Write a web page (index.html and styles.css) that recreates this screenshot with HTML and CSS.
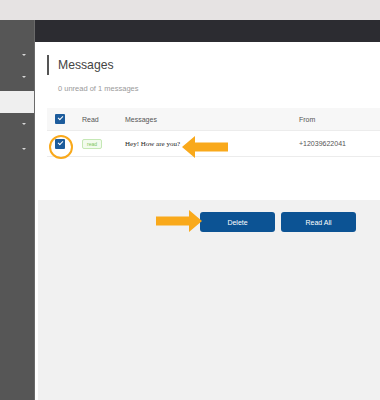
FILE: index.html
```html
<!DOCTYPE html>
<html lang="en">
<head>
  <meta charset="UTF-8" />
  <meta name="viewport" content="width=device-width, initial-scale=1.0"/>
  <title>Messages</title>
  <link rel="stylesheet" href="styles.css">
</head>
<body>

  <div class="top-strip"></div>

  <div class="layout">
    <div class="sidebar">
      <div class="nav-group">
        <div class="nav-item"><span class="caret"></span></div>
        <div class="nav-item"><span class="caret"></span></div>
      </div>
      <div class="nav-gap"></div>
      <div class="nav-group nav-group-last">
        <div class="nav-item"><span class="caret"></span></div>
        <div class="nav-item"><span class="caret"></span></div>
      </div>
    </div>

    <div class="main">
      <div class="topbar"></div>

      <div class="panel">
        <h1 class="page-title">Messages</h1>
        <p class="summary">0 unread of 1 messages</p>

        <div class="table">
          <div class="table-row table-head">
            <div class="cell"><span class="checkbox"></span></div>
            <div class="cell">Read</div>
            <div class="cell">Messages</div>
            <div class="cell">From</div>
          </div>
          <div class="table-row">
            <div class="cell"><span class="checkbox"></span></div>
            <div class="cell"><span class="badge">read</span></div>
            <div class="cell message-text">Hey! How are you?</div>
            <div class="cell">+12039622041</div>
          </div>
        </div>
      </div>

      <div class="actions">
        <button class="button">Delete</button>
        <button class="button">Read All</button>
      </div>
    </div>
  </div>

  <!-- tutorial markers drawn over the page -->
  <div class="marker-circle"></div>
  <svg class="marker-arrow arrow-left" width="48" height="24" viewBox="0 0 48 24">
    <path d="M0 12 L13 1 L13 7.5 L46 7.5 L46 16.5 L13 16.5 L13 23 Z" fill="#f9a91b"/>
  </svg>
  <svg class="marker-arrow arrow-right" width="48" height="24" viewBox="0 0 48 24">
    <path d="M47 12 L34 1 L34 7.5 L1 7.5 L1 16.5 L34 16.5 L34 23 Z" fill="#f9a91b"/>
  </svg>

</body>
</html>
```

FILE: styles.css
```css
* {
  margin: 0;
  padding: 0;
  box-sizing: border-box;
}

body {
  font-family: "Liberation Sans", Arial, sans-serif;
  background: #e6e3e3;
  width: 380px;
  height: 400px;
  overflow: hidden;
  position: relative;
}

.top-strip {
  height: 20px;
  background: #e6e3e3;
}

.layout {
  display: flex;
  height: 380px;
}

.sidebar {
  width: 35px;
  display: flex;
  flex-direction: column;
  border-right: 1px solid #6a6a6a;
}

.nav-group {
  background: #565656;
  height: 71px;
  padding-top: 34px;
}

.nav-group .nav-item {
  height: 22px;
}

.nav-group-last {
  flex: 1;
  padding-top: 10px;
}

.nav-group-last .nav-item {
  height: 25px;
}

.nav-gap {
  height: 22px;
  background: #efefef;
}

.nav-item {
  display: flex;
  justify-content: flex-end;
  padding-right: 8px;
}

.caret {
  width: 0;
  height: 0;
  border-left: 2px solid transparent;
  border-right: 2px solid transparent;
  border-top: 2px solid #d8d8d8;
}

.main {
  flex: 1;
  display: flex;
  flex-direction: column;
  background: #fff;
}

.topbar {
  height: 22px;
  background: #2c2c31;
}

.panel {
  height: 158px;
  padding: 13px 0 0 12px;
}

.page-title {
  border-left: 2px solid #555;
  height: 20px;
  line-height: 20px;
  padding-left: 9px;
  font-size: 12.2px;
  font-weight: normal;
  color: #444;
}

.summary {
  margin: 9px 0 0 11px;
  font-size: 7.5px;
  line-height: 10px;
  color: #9a9a9a;
}

.table {
  margin-top: 14px;
}

.table-row {
  display: grid;
  grid-template-columns: 35px 43px 174px 1fr;
  align-items: center;
  height: 26px;
  border-bottom: 1px solid #ececec;
  font-size: 7px;
  color: #555;
}

.table-head {
  height: 23px;
  background: #f7f7f7;
}

.cell {
  display: flex;
  align-items: center;
}

.checkbox {
  width: 10px;
  height: 10px;
  margin-left: 8px;
  background: #1d5c9c;
  border-radius: 1px;
  position: relative;
}

.checkbox::after {
  content: "";
  position: absolute;
  left: 3px;
  top: 2px;
  width: 4px;
  height: 2px;
  border-left: 1px solid #fff;
  border-bottom: 1px solid #fff;
  transform: rotate(-45deg);
}

.badge {
  font-size: 5px;
  color: #7cc65c;
  background: #f2fbee;
  border: 1px solid #c5e8b5;
  border-radius: 2px;
  padding: 1px 4px;
  line-height: 6px;
}

.message-text {
  font-family: "Liberation Serif", "Times New Roman", serif;
  font-size: 7px;
  color: #222;
}

.actions {
  flex: 1;
  background: #f1f1f1;
  margin-left: 3px;
  display: flex;
  justify-content: flex-end;
  align-items: flex-start;
  gap: 6px;
  padding: 12px 24px 0 0;
}

.button {
  width: 75px;
  height: 20px;
  border: none;
  border-radius: 3px;
  background: #0c5394;
  color: #fff;
  font-family: "Liberation Sans", Arial, sans-serif;
  font-size: 7px;
}

.marker-circle {
  position: absolute;
  left: 49px;
  top: 135px;
  width: 24px;
  height: 24px;
  border: 2.5px solid #f9a91b;
  border-radius: 50%;
}

.marker-arrow {
  position: absolute;
}

.arrow-left {
  left: 182px;
  top: 135px;
}

.arrow-right {
  left: 155px;
  top: 209px;
}
```
